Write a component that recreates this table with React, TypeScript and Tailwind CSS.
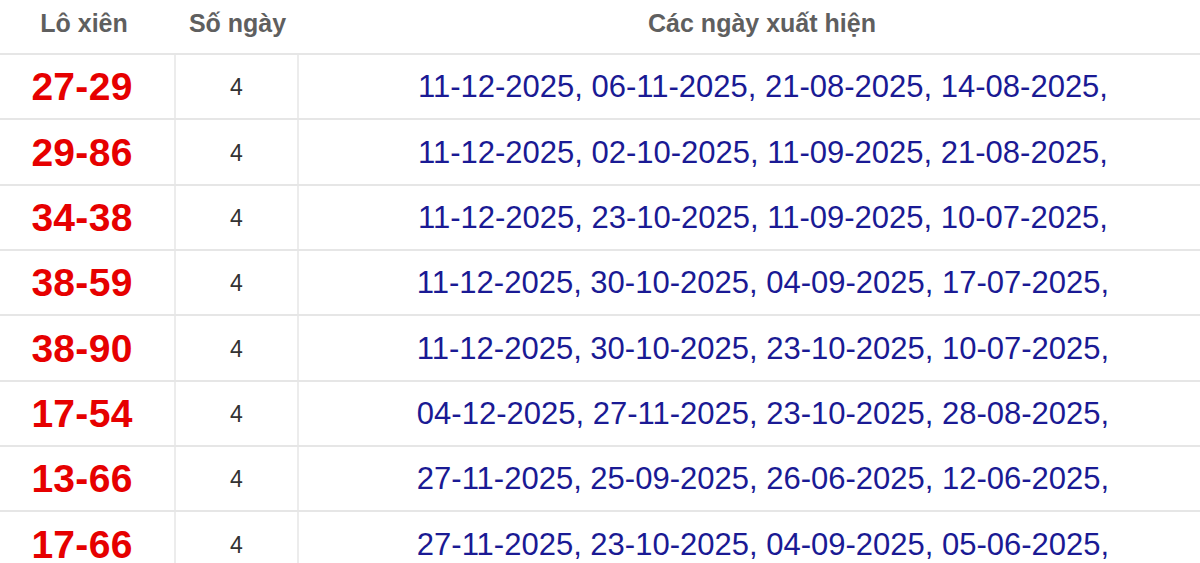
const rows = [
  { pair: '27-29', count: 4, dates: '11-12-2025, 06-11-2025, 21-08-2025, 14-08-2025,' },
  { pair: '29-86', count: 4, dates: '11-12-2025, 02-10-2025, 11-09-2025, 21-08-2025,' },
  { pair: '34-38', count: 4, dates: '11-12-2025, 23-10-2025, 11-09-2025, 10-07-2025,' },
  { pair: '38-59', count: 4, dates: '11-12-2025, 30-10-2025, 04-09-2025, 17-07-2025,' },
  { pair: '38-90', count: 4, dates: '11-12-2025, 30-10-2025, 23-10-2025, 10-07-2025,' },
  { pair: '17-54', count: 4, dates: '04-12-2025, 27-11-2025, 23-10-2025, 28-08-2025,' },
  { pair: '13-66', count: 4, dates: '27-11-2025, 25-09-2025, 26-06-2025, 12-06-2025,' },
  { pair: '17-66', count: 4, dates: '27-11-2025, 23-10-2025, 04-09-2025, 05-06-2025,' },
]

export default function App() {
  return (
    <div className="bg-white h-[563px] overflow-hidden font-['Liberation_Sans',Arial,sans-serif]">
      {/* header */}
      <div className="grid grid-cols-[176px_123px_1fr] h-[55px] border-b-2 border-[#e6e6e6] items-center text-[25px] font-bold text-[#5f5f5f]">
        <div className="text-center pr-[8px] pb-[5px]">Lô xiên</div>
        <div className="text-center pb-[5px]">Số ngày</div>
        <div className="text-center pl-[25px] pb-[5px]">Các ngày xuất hiện</div>
      </div>

      {rows.map((r, i) => (
        <div key={i} className="grid grid-cols-[176px_123px_1fr] h-[65.33px] border-b-2 border-[#e6e6e6]">
          <div className="flex items-center justify-center pr-[10px] pt-[2px] border-r-2 border-[#ececec] text-[39px] font-bold text-[#e60000] tracking-[0.3px]">
            {r.pair}
          </div>
          <div className="flex items-center justify-center pt-[2px] border-r-2 border-[#ececec] text-[23px] text-[#333]">
            {r.count}
          </div>
          <div className="flex items-center justify-center pl-[27px] pt-[2px] text-[31px] text-[#1a1a94]">
            {r.dates}
          </div>
        </div>
      ))}
    </div>
  )
}
